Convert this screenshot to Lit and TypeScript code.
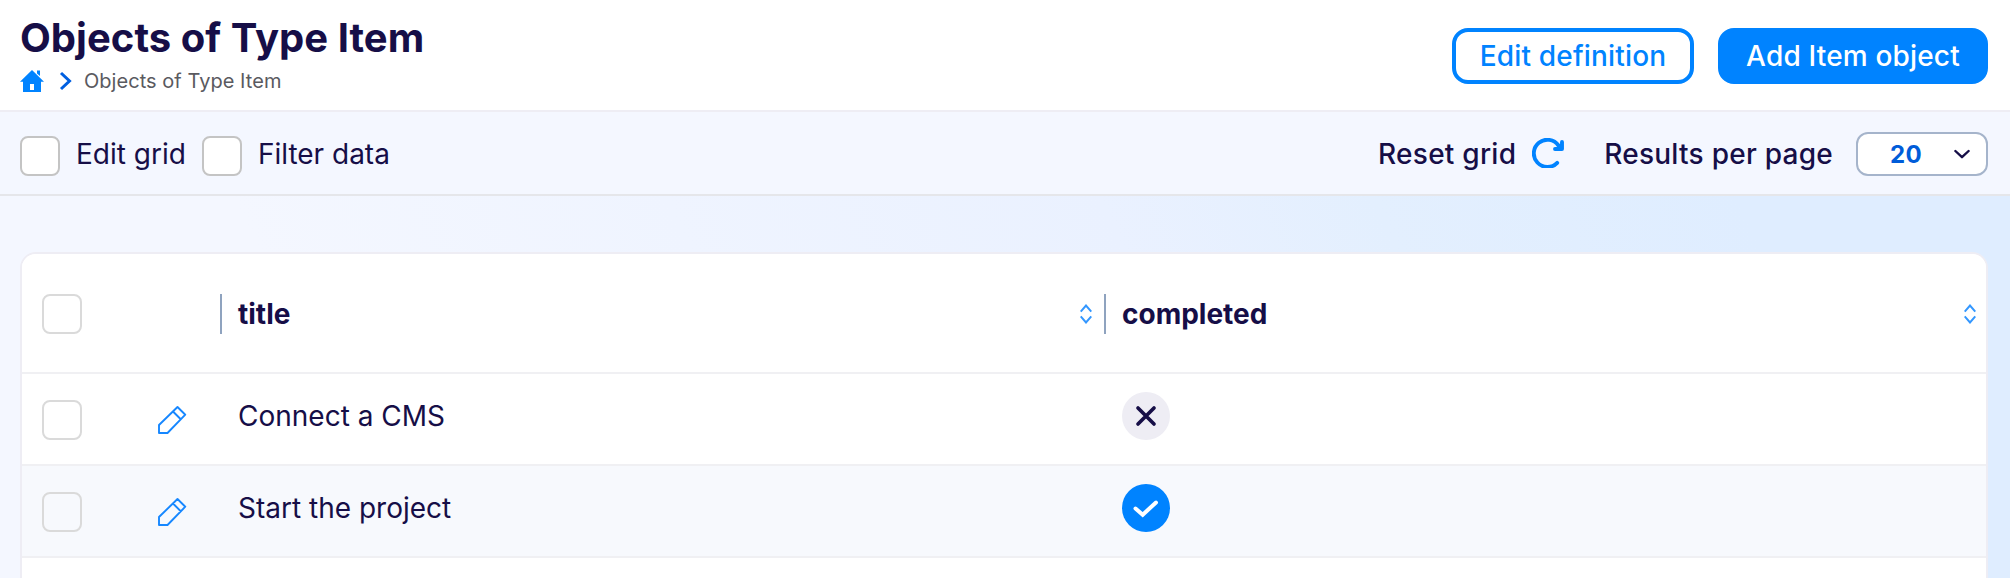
import { LitElement, html, css, svg } from "lit";
import { customElement, property } from "lit/decorators.js";

interface Item {
  title: string;
  completed: boolean;
}

const ITEMS: Item[] = [
  { title: "Connect a CMS", completed: false },
  { title: "Start the project", completed: true },
];

@customElement("check-box")
class CheckBox extends LitElement {
  @property({ type: Boolean, reflect: true }) muted = false;
  static styles = css`
    :host {
      box-sizing: border-box;
      display: block;
      flex: none;
      width: 40px;
      height: 40px;
      border: 2px solid #c4c4c4;
      border-radius: 8px;
      background: #fff;
    }
    :host([muted]) {
      border-color: #dadada;
      background: transparent;
    }
  `;
  render() {
    return html``;
  }
}

@customElement("page-header")
class PageHeader extends LitElement {
  static styles = css`
    :host {
      box-sizing: border-box;
      display: flex;
      justify-content: space-between;
      align-items: flex-start;
      height: 112px;
      padding: 13px 22px 0 20px;
      border-bottom: 2px solid #eeedf4;
      background: #fff;
    }
    .heading {
      margin: 0;
      color: #160e47;
      font-size: 40px;
      line-height: 49px;
      font-weight: 700;
      letter-spacing: 0.03px;
    }
    .crumbs {
      display: flex;
      align-items: center;
      height: 36px;
      margin-top: 1px;
      color: #5a5a5f;
      font-size: 20px;
      letter-spacing: 0.04px;
    }
    .home {
      width: 24px;
      height: 24px;
      margin-right: 15px;
    }
    .arrow {
      width: 14px;
      height: 20px;
      margin-right: 11px;
    }
    .actions {
      display: flex;
      gap: 24px;
      padding-top: 15px;
    }
    .button {
      box-sizing: border-box;
      height: 56px;
      border: 4px solid #0083ff;
      border-radius: 16px;
      padding: 0;
      font: 500 28px/48px Inter, sans-serif;
      letter-spacing: 0.17px;
      background: #fff;
      color: #0083ff;
    }
    .edit {
      width: 242px;
    }
    .add {
      width: 270px;
      background: #0083ff;
      color: #fff;
    }
  `;
  render() {
    return html`
      <div>
        <h1 class="heading">Objects of Type Item</h1>
        <nav class="crumbs">
          <svg class="home" viewBox="0 0 24 24">
            <path fill="#0083ff" d="M12 1 24 12.700H21V23H3V12.700H0ZM10 15V21H14V15Z" fill-rule="evenodd" />
            <path fill="#0083ff" d="M17 1.500h3v5.500l-3-2.500z" />
          </svg>
          <svg class="arrow" viewBox="0 0 14 20">
            <path d="m2 2 8.500 8L2 18" fill="none" stroke="#005fe0" stroke-width="3" />
          </svg>
          <span>Objects of Type Item</span>
        </nav>
      </div>
      <div class="actions">
        <button class="button edit">Edit definition</button>
        <button class="button add">Add Item object</button>
      </div>
    `;
  }
}

@customElement("grid-toolbar")
class GridToolbar extends LitElement {
  static styles = css`
    :host {
      box-sizing: border-box;
      display: flex;
      justify-content: space-between;
      align-items: center;
      height: 84px;
      padding: 2px 22px 0 20px;
      border-bottom: 2px solid #e5e6ea;
      background: #f4f7ff;
      color: #160e47;
      font-size: 28px;
    }
    .group {
      display: flex;
      align-items: center;
    }
    .option {
      display: flex;
      align-items: center;
      gap: 16px;
      margin-right: 16px;
    }
    .box {
      margin-top: 4px;
    }
    .label {
      font-weight: 500;
      letter-spacing: 0.25px;
    }
    .reload {
      width: 32px;
      height: 30px;
      margin: 0 40px 2px 16px;
    }
    .select {
      box-sizing: border-box;
      display: flex;
      align-items: center;
      width: 132px;
      height: 44px;
      margin-left: 23px;
      padding: 0 16px 0 32px;
      border: 2px solid #a5b4cb;
      border-radius: 12px;
      background: #fff;
      color: #005cd9;
      font-size: 24px;
      font-weight: 700;
      letter-spacing: 0.5px;
      justify-content: space-between;
    }
    .chevron {
      width: 16px;
      height: 10px;
    }
  `;
  render() {
    return html`
      <div class="group">
        <label class="option"><check-box class="box"></check-box>Edit grid</label>
        <label class="option"><check-box class="box"></check-box>Filter data</label>
      </div>
      <div class="group">
        <span class="label">Reset grid</span>
        <svg class="reload" viewBox="0 0 32 30" fill="none" stroke="#0083ff" stroke-width="3.900" stroke-linecap="round" stroke-linejoin="round">
          <path d="M25.200 24.800A13.600 13.600 0 1 1 26.500 7.500L29 10M30 4V11H23" />
          <path d="M30 6V11H25Z" fill="#0083ff" stroke="none" />
        </svg>
        <span class="label">Results per page</span>
        <div class="select">
          <span>20</span>
          <svg class="chevron" viewBox="0 0 16 10">
            <path d="m1.400 2 6.600 6.200 6.600-6.200" fill="none" stroke="#160e47" stroke-width="2.400" stroke-linecap="round" stroke-linejoin="round" />
          </svg>
        </div>
      </div>
    `;
  }
}

@customElement("item-table")
class ItemTable extends LitElement {
  static styles = css`
    :host {
      box-sizing: border-box;
      display: block;
      height: 480px;
      margin: 56px 22px 0 20px;
      border: 2px solid #eeedf4;
      border-radius: 16px;
      overflow: hidden;
      background: #fff;
      color: #160e47;
      font-size: 28px;
    }
    .row {
      box-sizing: border-box;
      display: grid;
      grid-template-columns: 114px 84px 884px 1fr;
      height: 92px;
      border-bottom: 2px solid #f0f0f3;
    }
    .row:nth-child(odd) {
      background: #f7f9fd;
    }
    .row.head {
      height: 120px;
      padding-top: 2px;
      align-items: center;
      background: #fff;
      font-weight: 700;
    }
    .select {
      padding: 26px 0 0 20px;
    }
    .head .select {
      padding: 0 0 0 20px;
    }
    .edit {
      padding: 30px 0 0 20px;
    }
    .pencil {
      display: block;
      width: 32px;
      height: 32px;
    }
    .column {
      display: flex;
      align-items: center;
      height: 40px;
      padding: 0 12px 0 16px;
      border-left: 2px solid #8fa3bf;
      justify-content: space-between;
    }
    .column:last-child {
      padding-right: 10px;
    }
    .sort {
      width: 12px;
      height: 20px;
    }
    .title {
      padding: 0 0 0 18px;
      line-height: 84px;
    }
    .state {
      padding: 18px 0 0 18px;
    }
    .badge {
      display: block;
      width: 48px;
      height: 48px;
    }
  `;
  column(name: string) {
    return html`<div class="column">
      <span>${name}</span>
      <svg class="sort" viewBox="0 0 12 20" fill="none" stroke="#3397ff" stroke-width="2">
        <path d="M.7 7.700 6 1.500l5.300 6.200M.7 12.300 6 18.500l5.300-6.200" />
      </svg>
    </div>`;
  }
  badge(on: boolean) {
    return html`<svg class="badge" viewBox="0 0 48 48" fill="none" stroke-width="4" stroke-linecap="round">
      <circle cx="24" cy="24" r="24" fill=${on ? "#0083ff" : "#eeedf4"} />
      ${on
        ? svg`<path d="m13.500 24.500 7.200 6.200 13.300-12.200" stroke="#fff" />`
        : svg`<path d="m16 16 16 16M32 16 16 32" stroke="#160e47" stroke-width="3.700" />`}
    </svg>`;
  }
  render() {
    return html`
      <div class="row head">
        <div class="select"><check-box muted></check-box></div>
        <div></div>
        ${this.column("title")} ${this.column("completed")}
      </div>
      ${ITEMS.map(
        (item) => html`<div class="row">
          <div class="select"><check-box muted></check-box></div>
          <div class="edit">
            <svg class="pencil" viewBox="0 0 32 32" fill="none" stroke="#1687ff" stroke-width="1.900" stroke-linejoin="round">
              <path d="M3 29V21L21.500 3 29.300 10.700 11.500 29ZM17 7.500l8 8" />
            </svg>
          </div>
          <div class="title">${item.title}</div>
          <div class="state">${this.badge(item.completed)}</div>
        </div>`
      )}
    `;
  }
}

@customElement("app-root")
class AppRoot extends LitElement {
  static styles = css`
    :host {
      display: block;
      height: 578px;
      overflow: hidden;
      font-family: Inter, sans-serif;
      background: linear-gradient(65deg, #f4f7ff 18%, #eaf1ff 56%, #e3effe 68%, #dfedff 84%);
    }
  `;
  render() {
    return html`
      <page-header></page-header>
      <grid-toolbar></grid-toolbar>
      <item-table></item-table>
    `;
  }
}
